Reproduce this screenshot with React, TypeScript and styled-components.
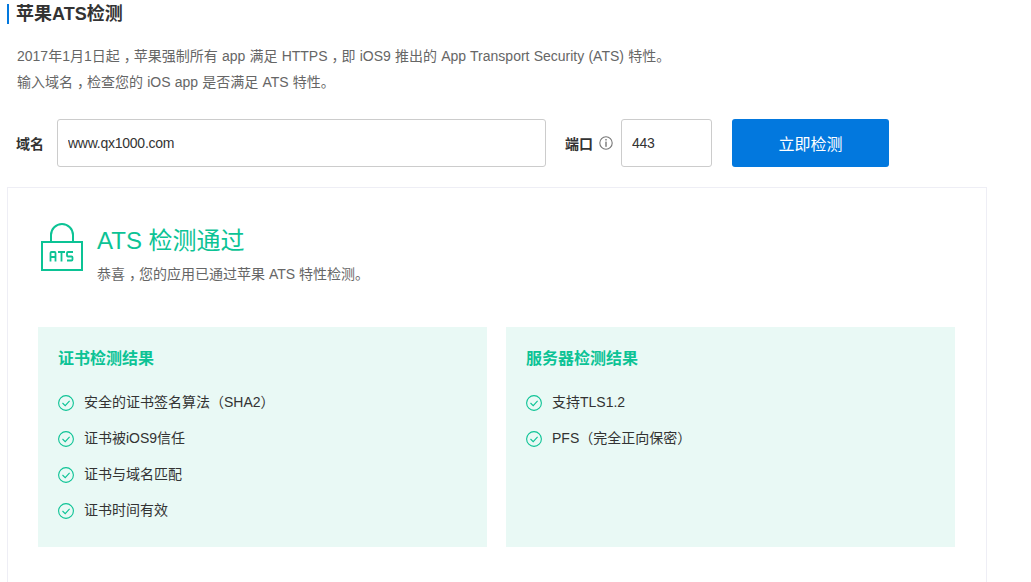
import * as React from 'react'
import styled, { createGlobalStyle } from 'styled-components'

const GlobalStyle = createGlobalStyle`
  html, body {
    margin: 0;
    height: 582px;
    overflow: hidden;
    background: #fff;
  }
  body {
    font-family: "Liberation Sans", "Noto Sans CJK SC", sans-serif;
    font-size: 14px;
    color: #333;
  }
`

const Page = styled.div`
  width: 1031px;
  height: 582px;
  overflow: hidden;
  padding: 4px 0 0 7px;
  box-sizing: border-box;
`

const Title = styled.h1`
  margin: 0;
  height: 20px;
  border-left: solid 2px #0278de;
  padding-left: 7px;
  font-size: 18px;
  font-weight: 700;
  line-height: 20px;
  color: #333;
`

const Intro = styled.div`
  margin-top: 19px;
  padding-left: 10px;
  line-height: 26px;
  word-spacing: 0.3px;
  color: #666;
`

// the comma sits in the middle of its cell in the original
const Comma = styled.span`
  margin-left: 4px;
  letter-spacing: -4px;
`

// Traditional Chinese glyphs have the brackets centred in the cell
const Bracket = styled.span`
  font-family: "Noto Sans CJK TC", sans-serif;
`

const Form = styled.div`
  display: flex;
  align-items: center;
  margin-top: 24px;
  padding-left: 9px;
  height: 48px;
`

const Label = styled.label`
  font-size: 14px;
  font-weight: 700;
  color: #333;
`

const Input = styled.input<{ $width: number; $left: number }>`
  box-sizing: border-box;
  width: ${p => p.$width}px;
  height: 48px;
  margin-left: ${p => p.$left}px;
  border: solid 1px #ccc;
  border-radius: 3px;
  padding: 0 10px;
  font: inherit;
  letter-spacing: -0.25px;
  color: #333;
  outline: none;
`

const PortLabel = styled(Label)`
  display: flex;
  align-items: center;
  gap: 6px;
  margin-left: 19px;
`

const Submit = styled.button`
  width: 157px;
  height: 48px;
  margin-left: 20px;
  border: none;
  border-radius: 3px;
  background: #0278de;
  color: #fff;
  font: inherit;
  font-size: 16px;
`

const Card = styled.section`
  box-sizing: border-box;
  width: 980px;
  height: 395px;
  margin-top: 20px;
  border: solid 1px #eeeef5;
  border-bottom: none;
  padding: 35px 30px 0;
`

const Result = styled.div`
  display: flex;
  gap: 13px;
  height: 104px;
  padding-left: 2px;
`

const ResultTitle = styled.div`
  font-size: 24px;
  line-height: 36px;
  color: #0cc395;
`

const ResultText = styled.div`
  margin-top: 5px;
  line-height: 20px;
  color: #666;
`

const Panels = styled.div`
  display: flex;
  gap: 19px;
`

const Panel = styled.div`
  box-sizing: border-box;
  width: 449px;
  height: 220px;
  background: #e9f9f5;
  padding: 20px;
`

const PanelTitle = styled.h2`
  margin: 0 0 12px;
  font-size: 16px;
  font-weight: 700;
  line-height: 24px;
  color: #0cc395;
`

const Item = styled.div`
  display: flex;
  align-items: center;
  gap: 10px;
  height: 36px;
  color: #333;

  svg {
    margin-top: 3px;
  }
`

const InfoIcon = () => (
  <svg width="14" height="14" viewBox="0 0 14 14" fill="none">
    <circle cx="7" cy="7" r="6.2" stroke="#777" strokeWidth="1.1" />
    <rect x="6.3" y="3" width="1.4" height="1.5" fill="#777" />
    <rect x="6.3" y="5.6" width="1.4" height="5.2" fill="#777" />
  </svg>
)

const CheckIcon = () => (
  <svg width="16" height="16" viewBox="0 0 16 16" fill="none">
    <circle cx="8" cy="8" r="7.4" stroke="#0cc395" strokeWidth="1.1" />
    <path d="M4.5 8 L7.2 10.6 L11.6 5.9" stroke="#0cc395" strokeWidth="1.1" />
  </svg>
)

const LockIcon = () => (
  <svg width="44" height="48" viewBox="0 0 44 48" fill="none" stroke="#0cc395" strokeWidth="2">
    <path d="M11 19 V12 A11 11 0 0 1 33 12 V19" />
    <rect x="2" y="19" width="40" height="28" />
    <g strokeWidth="1.8">
      <path d="M10.5 38.5 V30 Q10.5 29 11.5 29 H14.5 Q15.5 29 15.5 30 V38.5 M10.5 34 H15.5" />
      <path d="M18 29 H25 M21.5 29 V38.5" />
      <path d="M33 29 H28 Q27 29 27 30 V32.5 Q27 33.5 28 33.5 H31.5 Q32.5 33.5 32.5 34.5 V36.5 Q32.5 37.5 31.5 37.5 H27" />
    </g>
  </svg>
)

const certItems: React.ReactNode[] = [
  <>安全的证书签名算法<Bracket>（</Bracket>SHA2<Bracket>）</Bracket></>,
  '证书被iOS9信任',
  '证书与域名匹配',
  '证书时间有效',
]
const serverItems: React.ReactNode[] = [
  '支持TLS1.2',
  <>PFS<Bracket>（</Bracket>完全正向保密<Bracket>）</Bracket></>,
]

const ResultPanel: React.FC<{ title: string; items: React.ReactNode[] }> = props => (
  <Panel>
    <PanelTitle>{props.title}</PanelTitle>
    {props.items.map((item, i) => (
      <Item key={i}>
        <CheckIcon />
        <span>{item}</span>
      </Item>
    ))}
  </Panel>
)

const App: React.FC = () => (
  <Page>
    <GlobalStyle />
    <Title>苹果ATS检测</Title>
    <Intro>
      <div>2017年1月1日起<Comma>，</Comma>苹果强制所有 app 满足 HTTPS<Comma>，</Comma>即 iOS9 推出的 App Transport Security (ATS) 特性。</div>
      <div>输入域名<Comma>，</Comma>检查您的 iOS app 是否满足 ATS 特性。</div>
    </Intro>
    <Form>
      <Label>域名</Label>
      <Input $width={489} $left={13} defaultValue="www.qx1000.com" />
      <PortLabel>
        端口
        <InfoIcon />
      </PortLabel>
      <Input $width={91} $left={8} defaultValue="443" />
      <Submit>立即检测</Submit>
    </Form>
    <Card>
      <Result>
        <LockIcon />
        <div>
          <ResultTitle>ATS 检测通过</ResultTitle>
          <ResultText>恭喜<Comma>，</Comma>您的应用已通过苹果 ATS 特性检测。</ResultText>
        </div>
      </Result>
      <Panels>
        <ResultPanel title="证书检测结果" items={certItems} />
        <ResultPanel title="服务器检测结果" items={serverItems} />
      </Panels>
    </Card>
  </Page>
)

export default App
